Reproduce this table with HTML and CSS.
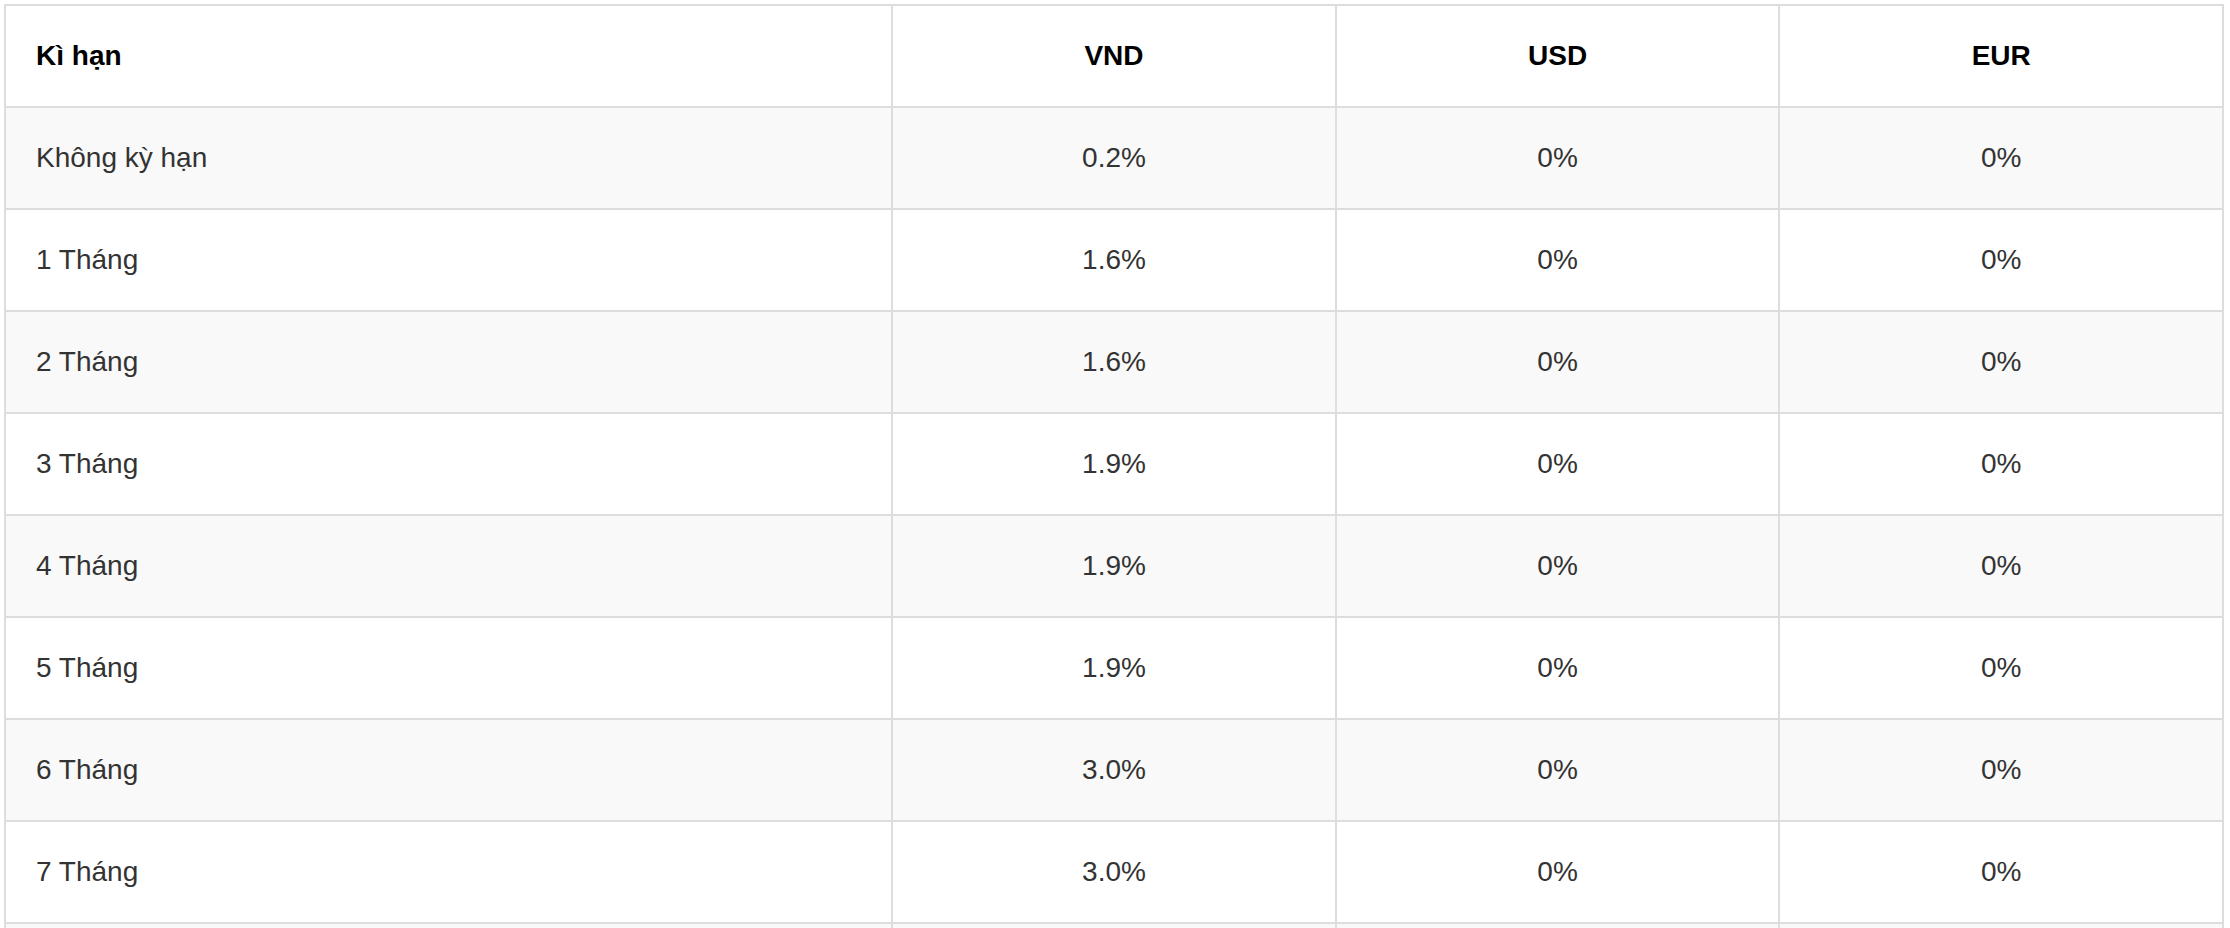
FILE: index.html
```html
<!DOCTYPE html>
<html lang="vi">
<head>
<meta charset="utf-8">
<title>Lãi suất</title>
<link rel="stylesheet" href="styles.css">
</head>
<body>
<table class="rates">
  <colgroup>
    <col class="col-term">
    <col class="col-cur">
    <col class="col-cur">
    <col class="col-cur">
  </colgroup>
  <thead>
    <tr><th class="term">Kì hạn</th><th>VND</th><th>USD</th><th>EUR</th></tr>
  </thead>
  <tbody>
    <tr><td class="term">Không kỳ hạn</td><td>0.2%</td><td>0%</td><td>0%</td></tr>
    <tr><td class="term">1 Tháng</td><td>1.6%</td><td>0%</td><td>0%</td></tr>
    <tr><td class="term">2 Tháng</td><td>1.6%</td><td>0%</td><td>0%</td></tr>
    <tr><td class="term">3 Tháng</td><td>1.9%</td><td>0%</td><td>0%</td></tr>
    <tr><td class="term">4 Tháng</td><td>1.9%</td><td>0%</td><td>0%</td></tr>
    <tr><td class="term">5 Tháng</td><td>1.9%</td><td>0%</td><td>0%</td></tr>
    <tr><td class="term">6 Tháng</td><td>3.0%</td><td>0%</td><td>0%</td></tr>
    <tr><td class="term">7 Tháng</td><td>3.0%</td><td>0%</td><td>0%</td></tr>
    <tr class="more"><td class="term">&nbsp;</td><td>&nbsp;</td><td>&nbsp;</td><td>&nbsp;</td></tr>
  </tbody>
</table>
</body>
</html>
```
FILE: styles.css
```css
html, body {
  margin: 0;
  padding: 0;
  background: #ffffff;
}
body {
  padding: 4px 4px 0 4px;
  font-family: "Liberation Sans", Arial, Helvetica, sans-serif;
}
.rates {
  width: 2220px;
  border-collapse: collapse;
  table-layout: fixed;
  border: 2px solid #dddddd;
}
.col-term { width: 40%; }
.col-cur { width: 20%; }
.rates th,
.rates td {
  border: 2px solid #dddddd;
  padding: 30px 30px;
  font-size: 28px;
  line-height: 40px;
  text-align: center;
  vertical-align: middle;
}
.rates th {
  font-weight: bold;
  color: #000000;
  background: #ffffff;
}
.rates td {
  color: #333333;
}
.rates th.term,
.rates td.term {
  text-align: left;
}
.rates tbody tr:nth-child(odd) td {
  background: #f9f9f9;
}
.rates tbody tr:nth-child(even) td {
  background: #ffffff;
}
```
